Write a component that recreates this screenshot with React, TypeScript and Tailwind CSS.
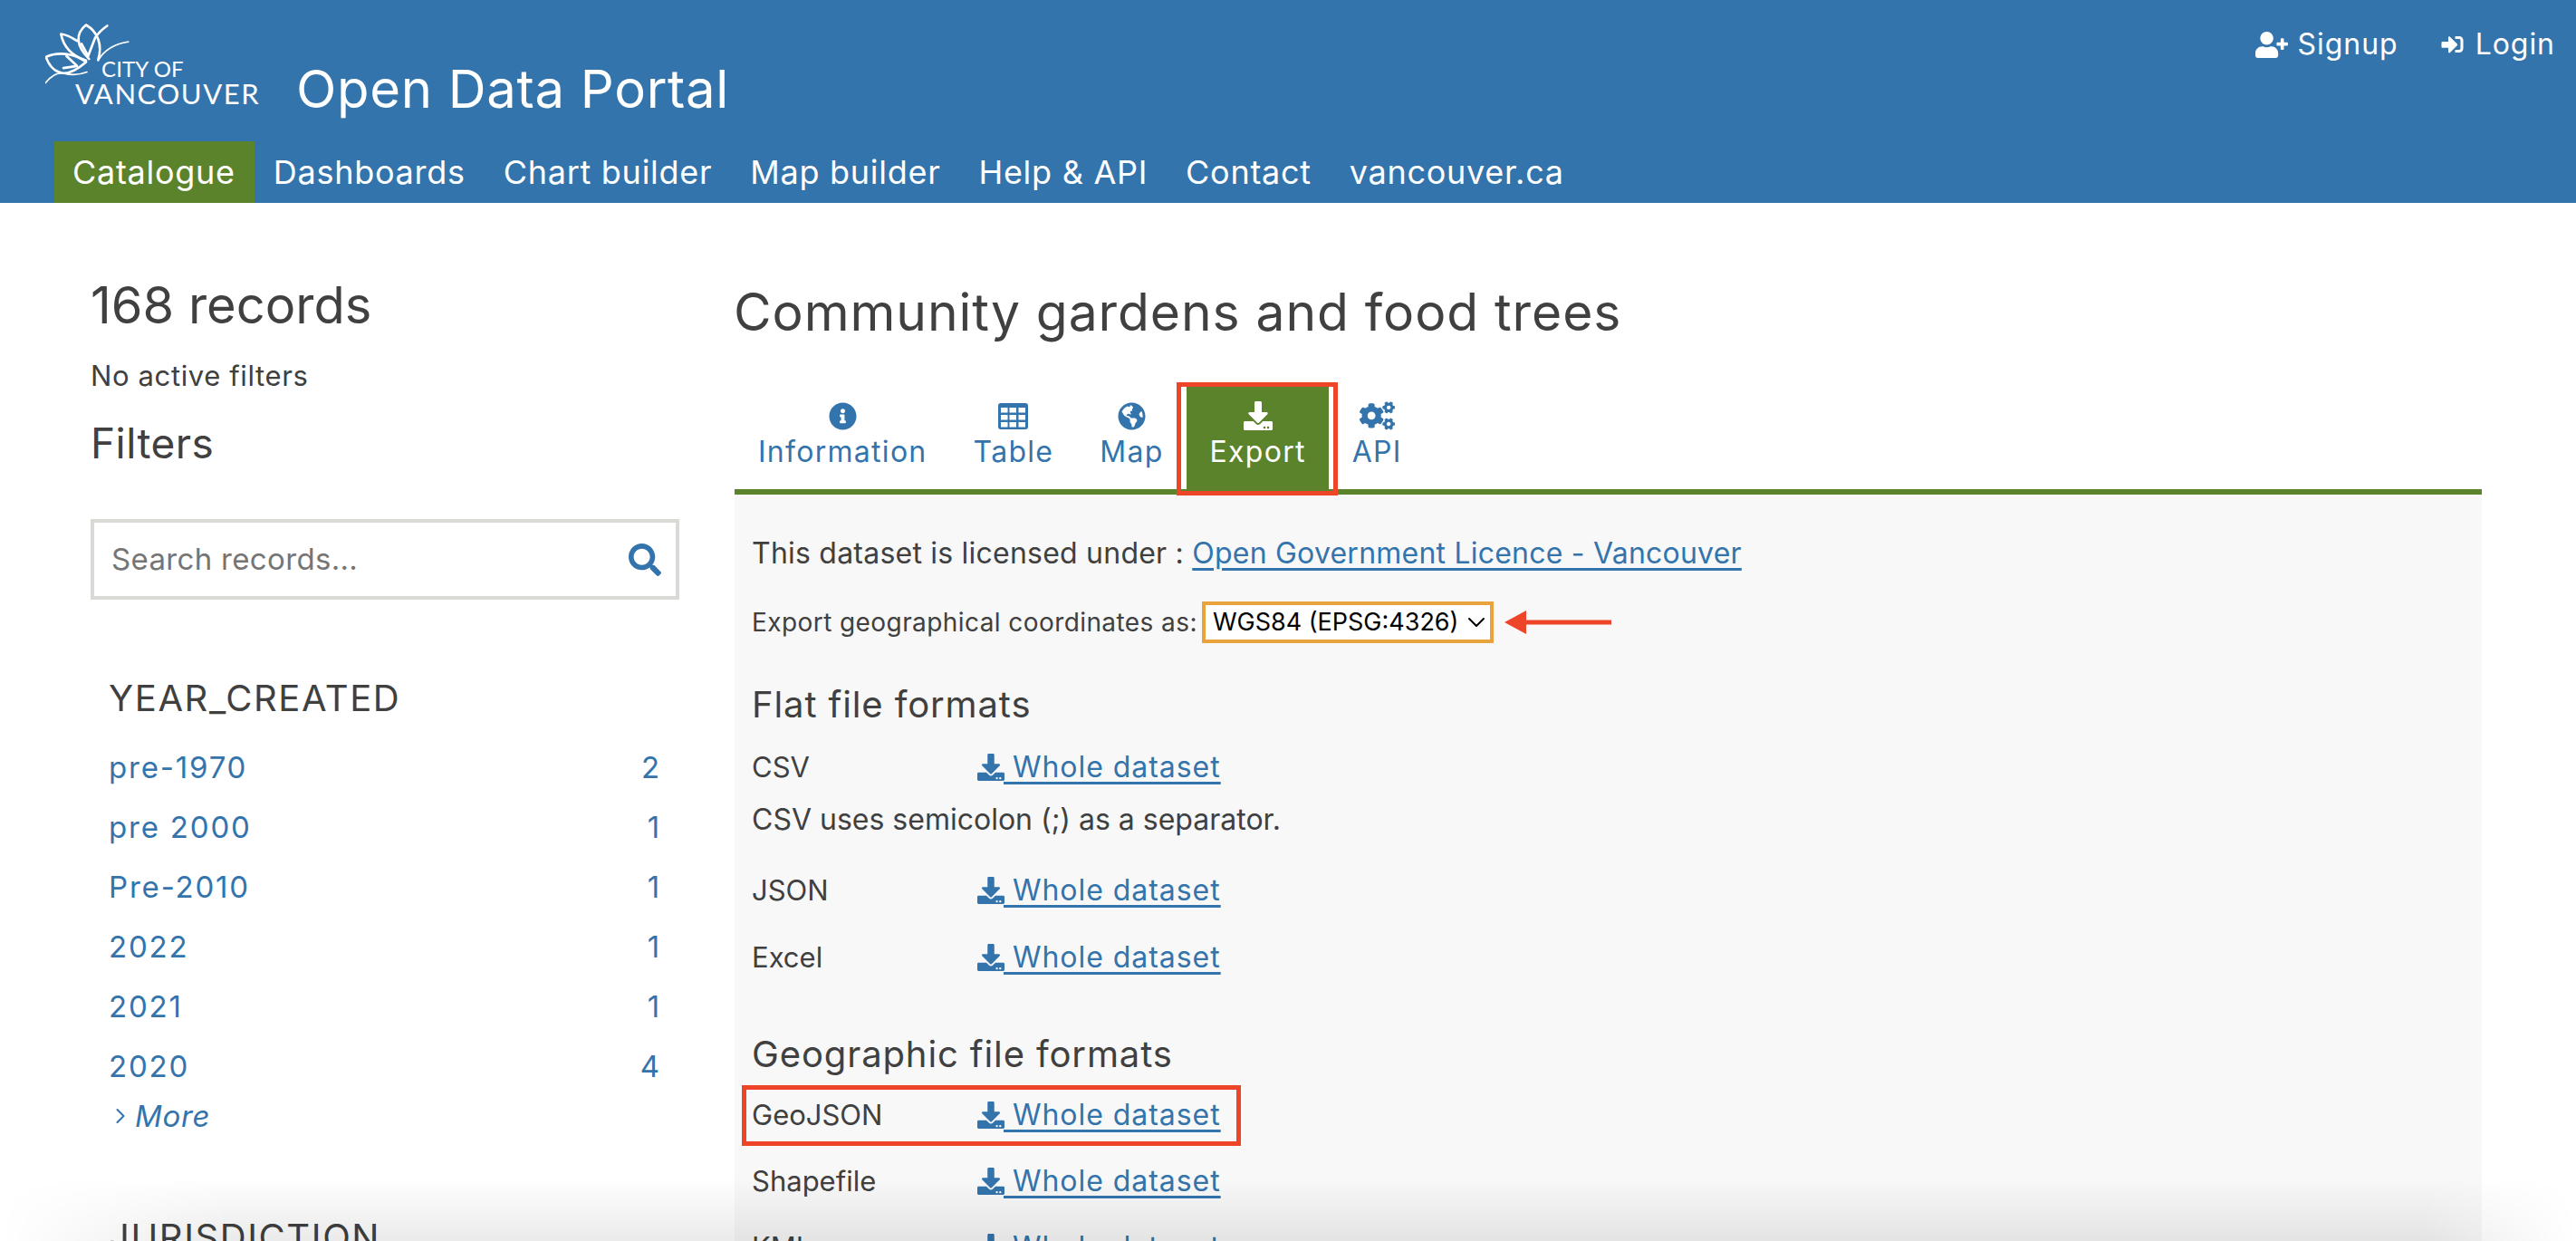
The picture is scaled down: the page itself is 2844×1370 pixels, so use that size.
import { FaInfoCircle, FaGlobeAmericas, FaCogs, FaDownload, FaSearch, FaUserPlus, FaSignInAlt } from "react-icons/fa"
import { ChevronDown, ChevronRight } from "lucide-react"

const navItems = ["Dashboards", "Chart builder", "Map builder", "Help & API", "Contact", "vancouver.ca"]

const yearFacets = [
  ["pre-1970", "2"],
  ["pre 2000", "1"],
  ["Pre-2010", "1"],
  ["2022", "1"],
  ["2021", "1"],
  ["2020", "4"],
]

const Logo = () => (
  <div className="relative w-[235px] h-[97px] shrink-0 font-['Lato',sans-serif] text-white">
    {/* flower mark, coordinates are 3x the pixels */}
    <svg viewBox="30 15 285 215" className="absolute left-[0px] top-[0px] w-[95px] h-[72px]" fill="none" stroke="#fff" strokeWidth="8" strokeLinecap="round" strokeLinejoin="round">
      <path d="M175 135C130 90 130 50 165 22C205 45 220 90 205 138" />
      <path d="M150 85L172 125L195 65C205 50 220 35 235 25" />
      <path d="M165 140C120 125 90 95 82 52C105 55 120 65 135 75" />
      <path d="M205 140C225 105 260 85 305 78" strokeWidth="5" />
      <path d="M32 128C70 110 125 115 165 145C130 175 100 190 75 178C50 170 40 150 32 128Z" />
      <path d="M100 125L135 158L90 165" />
      <path d="M30 215C50 190 70 178 90 182C120 190 150 185 168 178" strokeWidth="5" />
    </svg>
    <div className="absolute left-[62px] top-[39px] text-[24px] leading-[24px] tracking-[0.005em]">CITY OF</div>
    <div className="absolute left-[33px] top-[63px] text-[31px] leading-[30px] tracking-[0.05em]">VANCOUVER</div>
  </div>
)

const TableIcon = () => (
  <svg viewBox="0 0 33 29" className="w-[33px] h-[29px]">
    <rect width="33" height="29" rx="3" fill="currentColor" />
    {[5, 13, 21].map((y) =>
      [3, 12.5, 22.5].map((x) => <rect key={`${x}-${y}`} x={x} y={y} width="7.5" height="5.5" fill="#fff" />)
    )}
  </svg>
)

const DownloadLink = () => (
  <a className="text-[#3474ac] text-[32px] tracking-[0.03em] leading-[40px] whitespace-pre flex items-center">
    <FaDownload className="w-[30px] h-[30px] shrink-0" />
    <span className="underline decoration-[3px] underline-offset-[5px] -ml-[1px]"> Whole dataset</span>
  </a>
)

const DatasetRow = ({ label, className }: { label: string; className?: string }) => (
  <div className={`flex items-center h-[40px] ${className ?? ""}`}>
    <span className="w-[249px] text-[31px]">{label}</span>
    <DownloadLink />
  </div>
)

const Tab = ({ icon, label, active }: { icon: React.ReactNode; label: string; active?: boolean }) => (
  <div className={`flex flex-col items-center pl-[26px] pr-[25px] pt-[16px] h-[113px] ${active ? "bg-[#5b832b] text-white relative" : "text-[#3474ac]"}`}>
    <div className="h-[32px] flex items-center">{icon}</div>
    <div className="mt-[4px] text-[32px] leading-[40px] tracking-[0.04em]">{label}</div>
    {active && <div className="absolute -left-[11px] -right-[10px] -top-[5px] -bottom-[7px] border-[5px] border-[#ee4528]" />}
  </div>
)

export default function App() {
  return (
    <div className="font-['Inter',sans-serif] relative w-[2844px] h-[1370px] overflow-hidden bg-white text-[#404040]">
      <header className="bg-[#3474ac] h-[224px] text-white">
        <div className="flex justify-between h-[156px]">
          <div className="flex pl-[50px] pt-[25px]">
            <Logo />
            <div className="text-[58px] leading-[60px] tracking-[0.012em] ml-[42px] mt-[43px]">Open Data Portal</div>
          </div>
          <div className="flex pr-[23px] pt-[29px] text-[32px] leading-[40px] tracking-[0.03em]">
            <span className="flex items-center gap-[11px] h-[40px] mr-[46px]"><FaUserPlus className="w-[36px] h-[29px]" />Signup</span>
            <span className="flex items-center gap-[12px] h-[40px]"><FaSignInAlt className="w-[27px] h-[24px]" />Login</span>
          </div>
        </div>
        <nav className="flex pl-[60px] text-[36px] tracking-[0.02em] h-[68px] items-center">
          <span className="bg-[#5b832b] h-full pl-[20px] pr-[21px] flex items-center">Catalogue</span>
          {navItems.map((item) => (
            <span key={item} className="px-[21px] flex items-center">{item}</span>
          ))}
        </nav>
      </header>

      <div className="flex pl-[100px] pt-[83px]">
        <aside className="w-[650px] shrink-0">
          <h2 className="text-[56px] leading-[60px]">168 records</h2>
          <p className="mt-[28px] text-[31px] leading-[40px] tracking-[0.02em]">No active filters</p>
          <h3 className="text-[46px] leading-[50px] tracking-[0.01em] mt-[29px]">Filters</h3>
          <div className="mt-[59px] h-[89px] border-4 border-[#d9d9d6] flex items-center justify-between pl-[19px] pr-[16px]">
            <span className="text-[#757575] text-[33px] tracking-[0.01em]">Search records...</span>
            <FaSearch className="w-[36px] h-[36px] text-[#3474ac]" />
          </div>
          <div className="pl-[20px] pr-[20px] mt-[85px]">
            <h4 className="text-[40px] leading-[48px] tracking-[0.04em]">YEAR_CREATED</h4>
            <div className="mt-[19px]">
              {yearFacets.map(([label, count]) => (
                <div key={label} className="flex justify-between h-[66px] leading-[66px] text-[#3474ac] text-[33px] tracking-[0.055em]">
                  <span>{label}</span>
                  <span>{count}</span>
                </div>
              ))}
            </div>
            <div className="text-[#3474ac] italic text-[33px] leading-[40px] mt-[2px] flex items-center tracking-[0.02em]">
              <ChevronRight className="w-[28px] h-[28px] mr-[2px] -ml-[1px]" strokeWidth={1.75} />
              More
            </div>
            <h4 className="text-[40px] leading-[48px] tracking-[0.04em] mt-[90px]">JURISDICTION</h4>
          </div>
        </aside>

        <main className="ml-[61px] w-[1929px] pt-[6px]">
          <h1 className="text-[57px] leading-[64px] tracking-[0.016em] -ml-[1px]">Community gardens and food trees</h1>
          <div className="flex mt-[50px] h-[119px] border-b-[6px] border-[#5b832b]">
            <Tab icon={<FaInfoCircle className="w-[31px] h-[31px]" />} label="Information" />
            <Tab icon={<TableIcon />} label="Table" />
            <Tab icon={<FaGlobeAmericas className="w-[31px] h-[31px]" />} label="Map" />
            <Tab icon={<FaDownload className="w-[32px] h-[32px]" />} label="Export" active />
            <Tab icon={<FaCogs className="w-[39px] h-[36px]" />} label="API" />
          </div>
          <div className="bg-[#f8f8f8] pl-[19px] h-[900px]">
            <div className="pt-[45px] text-[32px] leading-[40px] tracking-[0.007em]">
              This dataset is licensed under : <a className="text-[#3474ac] underline decoration-[3px] underline-offset-[5px]">Open Government Licence - Vancouver</a>
            </div>
            <div className="mt-[33px] h-[46px] text-[28px] tracking-[0.015em] flex items-center">
              Export geographical coordinates as:
              <span className="relative ml-[5px] w-[322px] border-4 border-[#e8a33d] bg-white text-black text-[27px] tracking-normal h-[46px] pl-[8px] flex items-center">
                WGS84 (EPSG:4326)
                <ChevronDown className="absolute -right-[1px] w-[32px] h-[32px]" strokeWidth={1.5} />
              </span>
              {/* red annotation arrow */}
              <svg viewBox="0 0 118 26" className="ml-[12px] w-[118px] h-[26px]">
                <path d="M0 13L24 0V10.5H118V15.5H24V26Z" fill="#ee4528" />
              </svg>
            </div>
            <h3 className="text-[40px] leading-[40px] tracking-[0.022em] mt-[48px]">Flat file formats</h3>
            <DatasetRow label="CSV" className="mt-[29px]" />
            <p className="mt-[18px] text-[32px] leading-[40px]">CSV uses semicolon (;) as a separator.</p>
            <DatasetRow label="JSON" className="mt-[38px]" />
            <DatasetRow label="Excel" className="mt-[34px]" />
            <h3 className="text-[40px] leading-[40px] tracking-[0.022em] mt-[67px]">Geographic file formats</h3>
            <div className="relative mt-[27px]">
              <DatasetRow label="GeoJSON" />
              <div className="absolute -left-[11px] -top-[13px] w-[551px] h-[67px] border-[5px] border-[#ee4528]" />
            </div>
            <DatasetRow label="Shapefile" className="mt-[33px]" />
            <DatasetRow label="KML" className="mt-[33px]" />
          </div>
        </main>
      </div>

      {/* soft shadow along the bottom edge of the capture */}
      <div className="absolute left-0 right-0 bottom-0 h-[70px] bg-gradient-to-t from-black/[0.08] to-transparent [mask-image:linear-gradient(to_right,transparent,black_9%,black_94%,transparent)]" />
    </div>
  )
}
